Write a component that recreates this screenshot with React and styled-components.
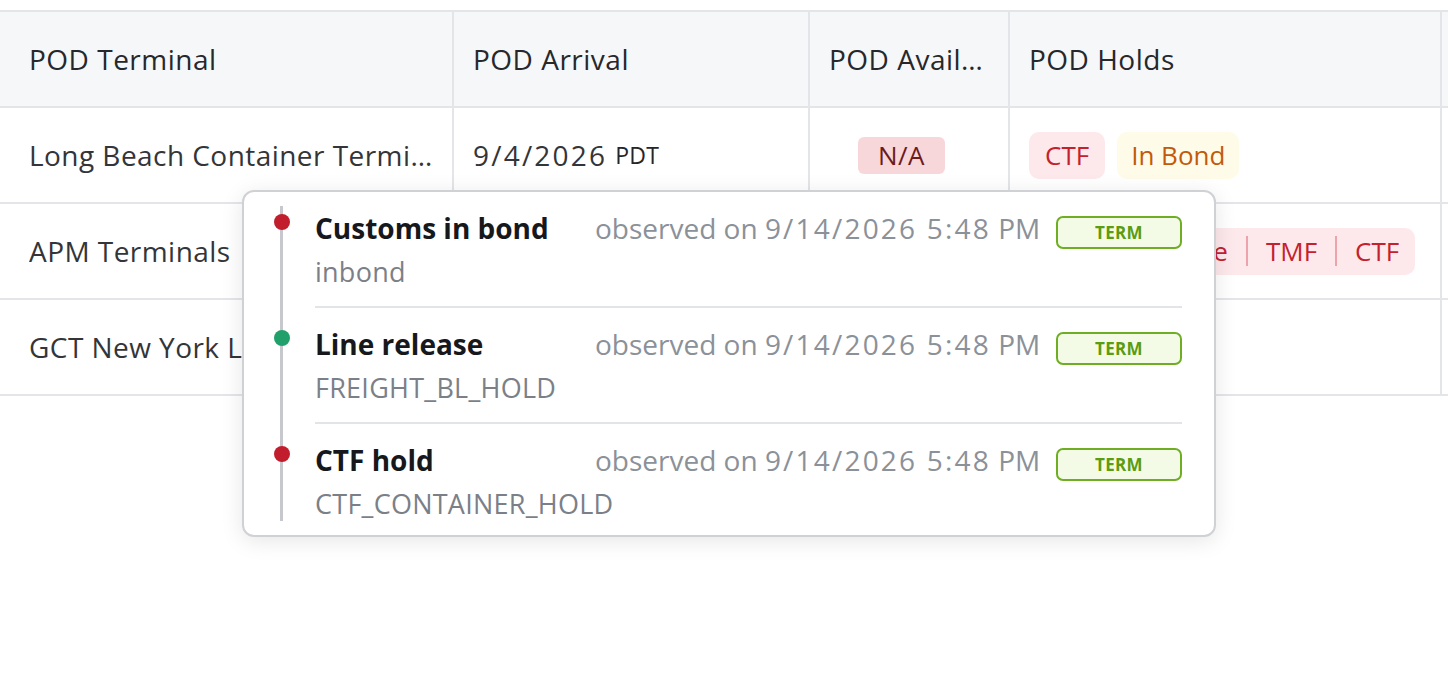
import React from "react";
import styled, { createGlobalStyle } from "styled-components";

const Global = createGlobalStyle`
  html, body { margin: 0; padding: 0; background: #fff; }
  body { font-family: "Open Sans", "Liberation Sans", sans-serif; -webkit-font-smoothing: antialiased; }
  * { box-sizing: border-box; }
`;

const Page = styled.div`
  position: relative;
  width: 1448px;
  height: 676px;
  overflow: hidden;
  background: #fff;
`;

const Grid = styled.div`
  display: grid;
  grid-template-columns: 10px 444px 356px 200px 432px 1fr;
  margin-top: 10px;
  border-top: 2px solid #e4e5e8;
`;

const Cell = styled.div`
  height: 96px;
  display: flex;
  align-items: center;
  justify-content: ${(p) => (p.$center ? "center" : "flex-start")};
  padding: ${(p) => (p.$center ? "0 15px 0 0" : "0 19px")};
  border-right: ${(p) => (p.$last ? "none" : "2px solid #e4e5e8")};
  border-bottom: 2px solid #e4e5e8;
  background: ${(p) => (p.$head ? "#f6f7f9" : "#fff")};
  color: ${(p) => (p.$head ? "#26282c" : "#333539")};
  font-size: 28px;
  letter-spacing: ${(p) => (p.$head ? "0.5px" : "0.45px")};
  white-space: nowrap;
  overflow: hidden;
  min-width: 0;
`;

const Clip = styled.span`
  display: block;
  overflow: hidden;
  text-overflow: ellipsis;
  white-space: nowrap;
  min-width: 0;
`;

const Digits = styled.span`
  letter-spacing: 2.2px;
`;

const Zone = styled.span`
  font-size: 23px;
  font-weight: 500;
  letter-spacing: 0.3px;
  color: #24262a;
  margin-left: 8px;
`;

const NA = styled.span`
  display: inline-flex;
  align-items: center;
  justify-content: center;
  width: 87px;
  height: 37px;
  border-radius: 6px;
  background: #f7d7da;
  color: #6d1a21;
  font-size: 26px;
  letter-spacing: 0.5px;
`;

const Holds = styled.div`
  display: flex;
  gap: 12px;
  align-items: center;
`;

const HoldBadge = styled.span`
  display: inline-flex;
  align-items: center;
  height: 47px;
  padding: 0 ${(p) => (p.$tone === "amber" ? "14px" : "16px")};
  border-radius: 10px;
  font-size: 26px;
  letter-spacing: 0;
  background: ${(p) => (p.$tone === "amber" ? "#fffbe9" : "#fde8eb")};
  color: ${(p) => (p.$tone === "amber" ? "#c25a0a" : "#c4212f")};
`;

const HoldGroup = styled.span`
  display: inline-flex;
  align-items: center;
  height: 47px;
  padding: 0 16px;
  border-radius: 10px;
  background: #fde8eb;
  color: #c4212f;
  font-size: 26px;
  letter-spacing: 0;
`;

const Seg = styled.span`
  display: inline-flex;
  align-items: center;
  & + & {
    margin-left: 18px;
    padding-left: 18px;
    border-left: 2px solid #eda3ab;
    height: 30px;
  }
`;

const Popover = styled.div`
  position: absolute;
  left: 242px;
  top: 190px;
  width: 974px;
  height: 347px;
  background: #fff;
  border: 2px solid #cfd1d5;
  border-radius: 12px;
  box-shadow: 0 4px 22px rgba(0, 0, 0, 0.1);
  padding: 0 32px 0 30px;
`;

const Timeline = styled.div`
  position: relative;
  &::before {
    content: "";
    position: absolute;
    left: 6px;
    top: 14px;
    bottom: 17px;
    width: 3px;
    background: #c6c8cd;
  }
`;

const Item = styled.div`
  display: flex;
  align-items: flex-start;
`;

const DotCol = styled.div`
  width: 41px;
  flex: none;
  padding-top: 22px;
  position: relative;
`;

const Dot = styled.span`
  display: block;
  width: 16px;
  height: 16px;
  border-radius: 50%;
  background: ${(p) => (p.$ok ? "#22a06b" : "#c11d2d")};
  position: relative;
`;

const Body = styled.div`
  flex: 1;
  display: grid;
  grid-template-columns: 280px 1fr 126px;
  align-items: start;
  padding: 18px 0 16px;
  border-bottom: ${(p) => (p.$last ? "none" : "2px solid #e3e4e7")};
`;

const Main = styled.div`
  display: flex;
  flex-direction: column;
  gap: 8px;
`;

const Title = styled.div`
  font-size: 28px;
  font-weight: 700;
  line-height: 36px;
  color: #16181b;
`;

const Sub = styled.div`
  font-size: 27px;
  line-height: 36px;
  letter-spacing: 0.25px;
  color: #7b8088;
`;

const Observed = styled.div`
  font-size: 28px;
  line-height: 36px;
  color: #8b9199;
  white-space: nowrap;
`;

const Source = styled.span`
  margin-top: 6px;
  height: 33px;
  display: flex;
  align-items: center;
  justify-content: center;
  border: 2px solid #6fae24;
  border-radius: 7px;
  background: #f3fbe7;
  color: #5a9c12;
  font-size: 17px;
  font-weight: 700;
  letter-spacing: 0.3px;
`;

const events = [
  { title: "Customs in bond", code: "inbond", ok: false },
  { title: "Line release", code: "FREIGHT_BL_HOLD", ok: true },
  { title: "CTF hold", code: "CTF_CONTAINER_HOLD", ok: false },
];

export default function App() {
  return (
    <Page>
      <Global />
      <Grid>
        <Cell $head />
        <Cell $head>POD Terminal</Cell>
        <Cell $head>POD Arrival</Cell>
        <Cell $head>
          <Clip>POD Available</Clip>
        </Cell>
        <Cell $head>POD Holds</Cell>
        <Cell $head $last />

        <Cell />
        <Cell>
          <Clip>Long Beach Container Terminal</Clip>
        </Cell>
        <Cell>
          <Digits>9/4/2026</Digits>
          <Zone>PDT</Zone>
        </Cell>
        <Cell $center>
          <NA>N/A</NA>
        </Cell>
        <Cell>
          <Holds>
            <HoldBadge>CTF</HoldBadge>
            <HoldBadge $tone="amber">In Bond</HoldBadge>
          </Holds>
        </Cell>
        <Cell $last />

        <Cell />
        <Cell>
          <Clip>APM Terminals</Clip>
        </Cell>
        <Cell>
          <Digits>9/12/2026</Digits>
          <Zone>PDT</Zone>
        </Cell>
        <Cell $center>
          <NA>N/A</NA>
        </Cell>
        <Cell>
          <HoldGroup>
            <Seg>In Bond</Seg>
            <Seg>Line</Seg>
            <Seg>TMF</Seg>
            <Seg>CTF</Seg>
          </HoldGroup>
        </Cell>
        <Cell $last />

        <Cell />
        <Cell>
          <Clip>GCT New York LLC</Clip>
        </Cell>
        <Cell>
          <Digits>9/18/2026</Digits>
          <Zone>EDT</Zone>
        </Cell>
        <Cell $center />
        <Cell />
        <Cell $last />
      </Grid>

      <Popover>
        <Timeline>
          {events.map((e, i) => (
            <Item key={e.title}>
              <DotCol>
                <Dot $ok={e.ok} />
              </DotCol>
              <Body $last={i === events.length - 1}>
                <Main>
                  <Title>{e.title}</Title>
                  <Sub>{e.code}</Sub>
                </Main>
                <Observed>
                  observed on <Digits>9/14/2026 5:48</Digits> PM
                </Observed>
                <Source>TERM</Source>
              </Body>
            </Item>
          ))}
        </Timeline>
      </Popover>
    </Page>
  );
}
